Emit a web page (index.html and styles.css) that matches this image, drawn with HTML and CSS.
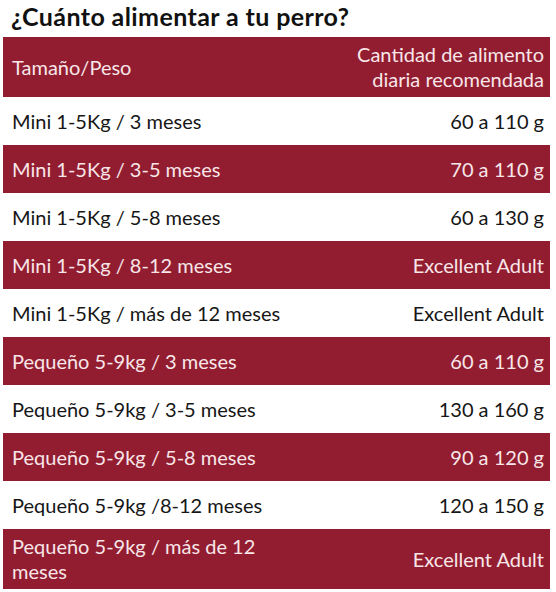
FILE: index.html
```html
<!DOCTYPE html>
<html lang="es">
<head>
<meta charset="utf-8">
<title>¿Cuánto alimentar a tu perro?</title>
<link rel="stylesheet" href="styles.css">
</head>
<body>
<h1 class="title">¿Cuánto alimentar a tu perro?</h1>
<div class="table">
  <div class="row head">
    <div class="cell left">Tamaño/Peso</div>
    <div class="cell right">Cantidad de alimento<br>diaria recomendada</div>
  </div>
  <div class="row">
    <div class="cell left">Mini 1-5Kg / 3 meses</div>
    <div class="cell right">60 a 110 g</div>
  </div>
  <div class="row dark">
    <div class="cell left">Mini 1-5Kg / 3-5 meses</div>
    <div class="cell right">70 a 110 g</div>
  </div>
  <div class="row">
    <div class="cell left">Mini 1-5Kg / 5-8 meses</div>
    <div class="cell right">60 a 130 g</div>
  </div>
  <div class="row dark">
    <div class="cell left">Mini 1-5Kg / 8-12 meses</div>
    <div class="cell right">Excellent Adult</div>
  </div>
  <div class="row">
    <div class="cell left">Mini 1-5Kg / más de 12 meses</div>
    <div class="cell right">Excellent Adult</div>
  </div>
  <div class="row dark">
    <div class="cell left">Pequeño 5-9kg / 3 meses</div>
    <div class="cell right">60 a 110 g</div>
  </div>
  <div class="row">
    <div class="cell left">Pequeño 5-9kg / 3-5 meses</div>
    <div class="cell right">130 a 160 g</div>
  </div>
  <div class="row dark">
    <div class="cell left">Pequeño 5-9kg / 5-8 meses</div>
    <div class="cell right">90 a 120 g</div>
  </div>
  <div class="row">
    <div class="cell left">Pequeño 5-9kg /8-12 meses</div>
    <div class="cell right">120 a 150 g</div>
  </div>
  <div class="row dark last">
    <div class="cell left">Pequeño 5-9kg / más de 12 meses</div>
    <div class="cell right">Excellent Adult</div>
  </div>
</div>
</body>
</html>
```
FILE: styles.css
```css
html, body {
  margin: 0;
  padding: 0;
  background: #ffffff;
}

body {
  font-family: Lato, "Open Sans", "Liberation Sans", sans-serif;
  color: #161616;
  width: 556px;
}

.title {
  margin: 0;
  height: 37px;
  padding: 1px 0 0 11px;
  box-sizing: border-box;
  font-size: 25px;
  font-weight: 700;
  letter-spacing: 0.4px;
  line-height: 30px;
  color: #111111;
}

.table {
  margin-left: 3px;
  width: 547px;
  display: flex;
  flex-direction: column;
}

.row {
  display: grid;
  grid-template-columns: 290px 1fr;
  height: 48px;
  align-items: center;
  font-size: 20px;
  line-height: 25px;
}

.row.head,
.row.last {
  height: 60px;
}

.head,
.dark {
  background: #921d31;
  color: #f8e6e8;
}

.cell.left {
  padding-left: 9px;
}

.cell.right {
  text-align: right;
  padding-right: 6px;
}
```
